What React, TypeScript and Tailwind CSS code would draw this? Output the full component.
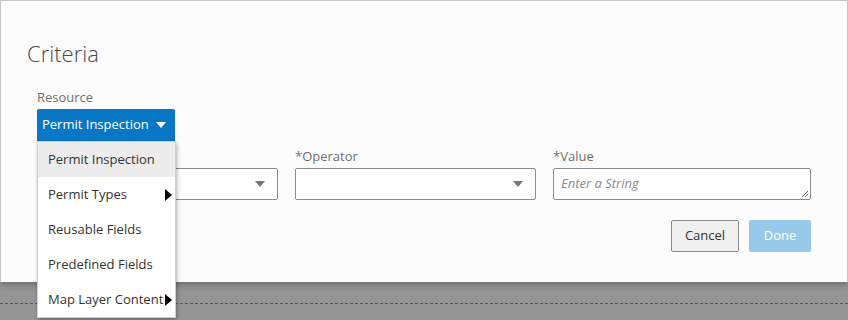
import { useState } from 'react';

const menuItems = [
  { label: 'Permit Inspection', sub: false },
  { label: 'Permit Types', sub: true },
  { label: 'Reusable Fields', sub: false },
  { label: 'Predefined Fields', sub: false },
  { label: 'Map Layer Content', sub: true },
];

function Caret({ className }: { className: string }) {
  return (
    <svg width="10" height="6" viewBox="0 0 10 6" className={className}>
      <path d="M0 0 L10 0 L5 6 Z" fill="currentColor" />
    </svg>
  );
}

function SubArrow() {
  return (
    <svg width="7" height="12" viewBox="0 0 7 12" className="text-black">
      <path d="M0 0 L7 6 L0 12 Z" fill="currentColor" />
    </svg>
  );
}

export default function App() {
  const [active] = useState('Permit Inspection');

  return (
    <div
      className="relative w-[848px] h-[320px] overflow-hidden bg-[#959595]"
      style={{ fontFamily: '"Open Sans", "Noto Sans", sans-serif' }}
    >
      <div className="relative z-10 h-[282px] bg-[#fcfcfc] border border-b-0 border-[#c8c8c8] shadow-[0_3px_6px_rgba(0,0,0,0.25)] pl-[26px] pt-[37px]">
        <h1 className="text-[22px] font-light text-[#4a4a4a] leading-[30px]">Criteria</h1>

        <div className="pl-[10px] pt-[20px]">
          <div className="text-[13px] text-[#707070] leading-[18px]">Resource</div>
          <button className="mt-[3px] h-[32px] w-[138px] pl-[5px] bg-[#0777c6] text-white text-[13px] flex items-center gap-[7px] rounded-t-[2px]">
            Permit Inspection
            <Caret className="text-white" />
          </button>

          <div className="flex gap-[17px] mt-[7px]">
            <div className="w-[241px]">
              <div className="h-[20px]" />
              <div className="h-[32px] border border-[#8c8c8c] rounded-[2px] bg-white flex items-center justify-end pr-[12px]">
                <Caret className="text-[#777]" />
              </div>
            </div>
            <div className="w-[241px]">
              <div className="text-[13px] text-[#707070] leading-[16px] mb-[4px]">*Operator</div>
              <div className="h-[32px] border border-[#8c8c8c] rounded-[2px] bg-white flex items-center justify-end pr-[12px]">
                <Caret className="text-[#777]" />
              </div>
            </div>
            <div className="w-[258px]">
              <div className="text-[13px] text-[#707070] leading-[16px] mb-[4px]">*Value</div>
              <div className="relative h-[32px] border border-[#8c8c8c] rounded-[2px] bg-white flex items-center pl-[7px]">
                <span className="text-[13px] italic text-[#8a8a8a]">Enter a String</span>
                <svg width="8" height="8" viewBox="0 0 8 8" className="absolute right-[1px] bottom-[1px]">
                  <path d="M7 1 L1 7 M7 4 L4 7" stroke="#666" strokeWidth="1" />
                </svg>
              </div>
            </div>
          </div>

          <div className="flex justify-end gap-[10px] mt-[20px] w-[774px]">
            <button className="h-[32px] w-[68px] bg-[#efefef] border border-[#8c8c8c] rounded-[2px] text-[13px] text-[#333]">
              Cancel
            </button>
            <button className="h-[32px] w-[62px] bg-[#99c9ea] rounded-[2px] text-[13px] text-white">
              Done
            </button>
          </div>
        </div>
      </div>

      <div className="mt-[21px] border-t border-dashed border-[#0f6aa3]" />

      <div className="absolute z-20 left-[37px] top-[141px] w-[139px] bg-white border border-[#d0d0d0] shadow-[1px_2px_4px_rgba(0,0,0,0.3)]">
        {menuItems.map((item) => (
          <div
            key={item.label}
            className={`h-[35px] flex items-center justify-between pl-[10px] pr-[3px] text-[13px] text-[#333] ${
              item.label === active ? 'bg-[#ececec]' : ''
            }`}
          >
            <span className="whitespace-nowrap">{item.label}</span>
            {item.sub && <SubArrow />}
          </div>
        ))}
      </div>
    </div>
  );
}
